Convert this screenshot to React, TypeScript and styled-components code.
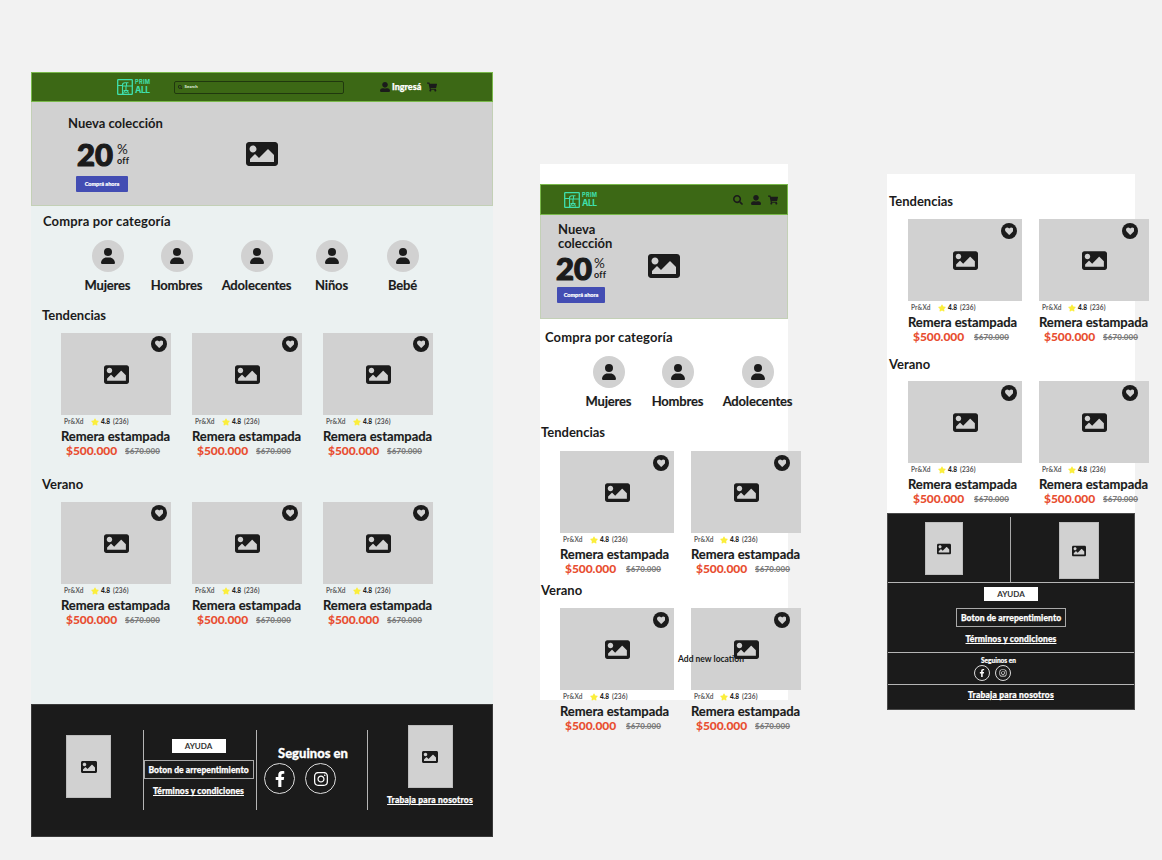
import React from "react";
import styled, { createGlobalStyle } from "styled-components";
import {
  FaImage,
  FaSearch,
  FaShoppingCart,
  FaStar,
  FaHeart,
  FaFacebookF,
  FaInstagram,
  FaUserAlt,
} from "react-icons/fa";
import { FaUser } from "react-icons/fa6";

const ink = "#1b1b1b";
const grey = "#d1d1d1";

const GlobalStyle = createGlobalStyle`
  * { box-sizing: border-box; }
  body { margin: 0; background: #f2f2f2; font-family: Lato, "Open Sans", sans-serif; color: ${ink}; }
  svg { display: block; flex: none; }
`;

const Canvas = styled.div`
  position: relative;
  width: 1162px;
  height: 860px;
  overflow: hidden;
  background: #f2f2f2;
`;

/* Artboards are freely placed on the design canvas */
const Artboard = styled.section<{ $x: number; $y: number; $w: number; $h: number; $bg: string }>`
  position: absolute;
  left: ${(p) => p.$x}px;
  top: ${(p) => p.$y}px;
  width: ${(p) => p.$w}px;
  height: ${(p) => p.$h}px;
  background: ${(p) => p.$bg};
`;

const Text = styled.span<{
  $size: number;
  $line?: number;
  $weight?: number;
  $track?: number;
  $color?: string;
  $stroke?: number;
}>`
  display: block;
  flex: none;
  white-space: nowrap;
  font-size: ${(p) => p.$size}px;
  line-height: ${(p) => p.$line ?? 16}px;
  font-weight: ${(p) => p.$weight ?? 700};
  letter-spacing: ${(p) => p.$track ?? 0}px;
  color: ${(p) => p.$color ?? ink};
  -webkit-text-stroke: ${(p) => p.$stroke ?? 0}px currentColor;
`;

const NavBar = styled.header<{ $left: number; $h?: number }>`
  display: flex;
  align-items: center;
  height: ${(p) => p.$h ?? 30}px;
  padding-left: ${(p) => p.$left}px;
  border: 1px solid #79b84a;
  background: #3c6815;
`;

const LogoRow = styled.div`
  display: flex;
  gap: 2px;
  width: 34px;
  height: 16px;
  flex: none;
`;

const LogoWords = styled.div`
  display: flex;
  flex-direction: column;
  width: 16px;
`;

const LogoWord = styled.span<{ $size: number; $line: number; $track: number }>`
  font-family: Inter, sans-serif;
  font-weight: 700;
  font-size: ${(p) => p.$size}px;
  line-height: ${(p) => p.$line}px;
  letter-spacing: ${(p) => p.$track}px;
  color: #3fe0ae;
  white-space: nowrap;
`;

const SearchBox = styled.div`
  display: flex;
  align-items: center;
  gap: 2px;
  width: 170px;
  height: 13px;
  margin-left: 23px;
  padding-left: 3px;
  border: 1px solid #20380e;
  border-radius: 2px;
`;

const NavIcons = styled.div<{ $left: number; $gap: number }>`
  display: flex;
  align-items: center;
  gap: ${(p) => p.$gap}px;
  margin-left: ${(p) => p.$left}px;
`;

const Hero = styled.div`
  display: flex;
  height: 104px;
  border: 1px solid #c3d0b6;
  border-top: 0;
  background: ${grey};
`;

const HeroCopy = styled.div<{ $w: number; $pad: string }>`
  width: ${(p) => p.$w}px;
  padding: ${(p) => p.$pad};
`;

const Promo = styled.div<{ $left: number; $gap: number; $h: number }>`
  display: flex;
  align-items: center;
  gap: ${(p) => p.$gap}px;
  height: ${(p) => p.$h}px;
  margin-left: ${(p) => p.$left}px;
`;

const BuyButton = styled.button<{ $w: number; $left: number }>`
  display: flex;
  align-items: center;
  justify-content: center;
  width: ${(p) => p.$w}px;
  height: 16px;
  margin: 0 0 0 ${(p) => p.$left}px;
  padding: 0;
  border: 0;
  border-radius: 1px;
  background: #434db3;
  font-family: inherit;
`;

const HeroArt = styled.div<{ $top: number }>`
  padding-top: ${(p) => p.$top}px;
`;

const Heading = styled(Text).attrs({ as: "h2" })<{ $left: number; $top?: number }>`
  margin: ${(p) => p.$top ?? 0}px 0 0 ${(p) => p.$left}px;
`;

const Categories = styled.div<{ $cols: string; $left: number; $top: number }>`
  display: grid;
  grid-template-columns: ${(p) => p.$cols};
  padding: ${(p) => p.$top}px 0 0 ${(p) => p.$left}px;
`;

const Category = styled.div`
  display: flex;
  flex-direction: column;
  align-items: center;
  gap: 5px;
`;

const Avatar = styled.div`
  display: grid;
  place-items: center;
  width: 32px;
  height: 32px;
  border-radius: 50%;
  background: ${grey};
`;

const Shelf = styled.section<{ $h: number; $left: number; $top: number }>`
  height: ${(p) => p.$h}px;
  padding: ${(p) => p.$top}px 0 0 ${(p) => p.$left}px;
`;

const CardRow = styled.div<{ $left: number; $gap: number; $top: number }>`
  display: flex;
  gap: ${(p) => p.$gap}px;
  padding: ${(p) => p.$top}px 0 0 ${(p) => p.$left}px;
`;

const Card = styled.article<{ $w: number }>`
  flex: none;
  width: ${(p) => p.$w}px;
`;

const Photo = styled.div`
  position: relative;
  display: grid;
  place-items: center;
  height: 82px;
  background: ${grey};
`;

const Favourite = styled.div<{ $right: number; $top: number }>`
  position: absolute;
  top: ${(p) => p.$top}px;
  right: ${(p) => p.$right}px;
  display: grid;
  place-items: center;
  width: 16px;
  height: 16px;
  border-radius: 50%;
  background: ${ink};
`;

const Meta = styled.div`
  display: flex;
  align-items: center;
  height: 14px;
  padding-left: 3px;
`;

const Brand = styled.div<{ $w: number }>`
  width: ${(p) => p.$w}px;
  flex: none;
`;

const Score = styled.div`
  width: 12px;
  margin-left: 2px;
  flex: none;
`;

const Prices = styled.div`
  display: flex;
  align-items: center;
  height: 14px;
  padding-left: 5px;
`;

const PriceNow = styled.div<{ $w: number }>`
  width: ${(p) => p.$w}px;
  flex: none;
`;

const OldPrice = styled(Text)`
  text-decoration: line-through;
`;

const Thumb = styled.div<{ $w: number; $h: number }>`
  display: grid;
  place-items: center;
  flex: none;
  width: ${(p) => p.$w}px;
  height: ${(p) => p.$h}px;
  background: ${grey};
  border: 1px solid #bdbdbd;
`;

const Link = styled(Text)`
  text-decoration: underline;
  text-decoration-thickness: 1px;
  text-underline-offset: 1px;
`;

const HelpTag = styled.div`
  display: grid;
  place-items: center;
  width: 54px;
  height: 14px;
  background: #fff;
`;

const RegretButton = styled.div`
  display: grid;
  place-items: center;
  width: 110px;
  height: 19px;
  margin: 7px 0 5px;
  border: 1px solid #a9a9a9;
`;

const HelpStack = styled.div`
  display: flex;
  flex-direction: column;
  align-items: center;
`;

const SocialRow = styled.div<{ $gap: number }>`
  display: flex;
  gap: ${(p) => p.$gap}px;
`;

const SocialRing = styled.div<{ $d: number }>`
  display: grid;
  place-items: center;
  width: ${(p) => p.$d}px;
  height: ${(p) => p.$d}px;
  border: 1px solid #dcdcdc;
  border-radius: 50%;
`;

const WideFooter = styled.footer`
  display: flex;
  height: 133px;
  margin-top: auto;
  padding-top: 25px;
  border: 1px solid #3a3a3a;
  background: ${ink};
`;

const FooterCol = styled.div<{ $w: number; $pad: string; $rule?: boolean }>`
  width: ${(p) => p.$w}px;
  height: 80px;
  padding: ${(p) => p.$pad};
  border-right: ${(p) => (p.$rule ? "1px solid #b5b5b5" : "0")};
  flex: none;
`;

const LastCol = styled.div`
  display: flex;
  flex-direction: column;
  align-items: center;
  gap: 4px;
  width: 124px;
  margin-top: -5px;
`;

const SlimFooter = styled.footer`
  height: 197px;
  border: 1px solid #4a4a4a;
  background: ${ink};
`;

const SlimBand = styled.div<{ $h: number; $pad: string; $last?: boolean }>`
  height: ${(p) => p.$h}px;
  padding: ${(p) => p.$pad};
  border-bottom: ${(p) => (p.$last ? "0" : "1px solid #b5b5b5")};
`;

const SplitBand = styled(SlimBand)`
  display: flex;
`;

const SplitHalf = styled.div<{ $pad: string; $rule?: boolean }>`
  width: 123px;
  height: 65px;
  padding: ${(p) => p.$pad};
  border-right: ${(p) => (p.$rule ? "1px solid #a9a9a9" : "0")};
`;

const Column = styled.div`
  display: flex;
  flex-direction: column;
  height: 100%;
`;

const Floating = styled.div`
  position: absolute;
  left: 678px;
  top: 653px;
`;

function Logo() {
  return (
    <LogoRow>
      <svg width="16" height="16" viewBox="0 0 16 16" fill="none" stroke="#3fe0ae" strokeWidth="1.1">
        <rect x="0.7" y="0.7" width="14.6" height="14.6" rx="0.6" strokeWidth="1.3" />
        <path d="M1 6.5H5.5M9 7H15M5.5 15V6Q5.5 3.8 8 3.8H11.5M5.5 7H9.5V4M9 7V11.5M6.5 11.5H11.5M7.5 12L6.5 14.5M10.5 12L11.5 14.5M8 13.2H10" />
      </svg>
      <LogoWords>
        <LogoWord $size={5.6} $line={6} $track={0.3}>PRIM</LogoWord>
        <LogoWord $size={8.6} $line={11} $track={-0.5}>ALL</LogoWord>
      </LogoWords>
    </LogoRow>
  );
}

interface ProductProps {
  w: number;
  heartRight: number;
  heartTop?: number;
  starAt?: number;
  oldAt?: number;
}

function Product({ w, heartRight, heartTop = 4, starAt = 27, oldAt = 59 }: ProductProps) {
  return (
    <Card $w={w}>
      <Photo>
        <FaImage size={25} />
        <Favourite $right={heartRight} $top={heartTop}>
          <FaHeart size={8.5} color={grey} />
        </Favourite>
      </Photo>
      <Meta>
        <Brand $w={starAt}>
          <Text $size={6.5} $line={14} $color="#5f5f5f" $track={0.1}>Pr&amp;Xd</Text>
        </Brand>
        <FaStar size={8} color="#fbee3c" />
        <Score>
          <Text $size={6.5} $line={14} $weight={900}>4.8</Text>
        </Score>
        <Text $size={6.5} $line={14} $color="#505050" $track={0.15}>(236)</Text>
      </Meta>
      <Text $size={13} $line={15} $track={-0.07} $stroke={0.15}>Remera estampada</Text>
      <Prices>
        <PriceNow $w={oldAt}>
          <Text $size={12} $line={14} $weight={900} $color="#e84e31" $track={-0.06}>$500.000</Text>
        </PriceNow>
        <OldPrice $size={8} $line={14} $weight={900} $color="#7d7d7d" $track={0.08}>$670.000</OldPrice>
      </Prices>
    </Card>
  );
}

function CategoryItem({ name }: { name: string }) {
  return (
    <Category>
      <Avatar>
        <FaUser size={16} />
      </Avatar>
      <Text $size={13} $track={-0.18} $stroke={0.15}>{name}</Text>
    </Category>
  );
}

function Help() {
  return (
    <HelpStack>
      <HelpTag>
        <Text $size={8} $line={12} $color="#333">AYUDA</Text>
      </HelpTag>
      <RegretButton>
        <Text $size={8.5} $line={12} $weight={900} $color="#fff" $track={0.08} $stroke={0.25}>Boton de arrepentimiento</Text>
      </RegretButton>
      <Link $size={8.5} $line={15} $weight={900} $color="#fff" $track={0.13} $stroke={0.25}>Términos y condiciones</Link>
    </HelpStack>
  );
}

function Offer() {
  return (
    <div>
      <Text $size={13.5} $line={13} $weight={400}>%</Text>
      <Text $size={9} $line={10} $track={0.2}>off</Text>
    </div>
  );
}

function Desktop() {
  return (
    <Artboard $x={31} $y={72} $w={462} $h={765} $bg="#ebf1f1">
      <Column>
        <NavBar $left={85}>
          <Logo />
          <SearchBox>
            <FaSearch size={4.5} />
            <Text $size={4.4} $line={8} $weight={900} $color="#dfe8d8">Search</Text>
          </SearchBox>
          <NavIcons $left={36} $gap={2}>
            <FaUserAlt size={10} />
            <Text $size={9} $weight={900} $color="#fff" $line={12} $stroke={0.25}>Ingresá</Text>
          </NavIcons>
          <NavIcons $left={6} $gap={0}>
            <FaShoppingCart size={10} />
          </NavIcons>
        </NavBar>
        <Hero>
          <HeroCopy $w={214} $pad="12px 0 0 36px">
            <Text $size={13} $line={18}>Nueva colección</Text>
            <Promo $left={9} $gap={4} $h={44}>
              <Text $size={31} $line={44} $weight={900} $stroke={1.2}>20</Text>
              <Offer />
            </Promo>
            <BuyButton $w={52} $left={8}>
              <Text $size={5.5} $line={8} $weight={900} $color="#fff" $stroke={0.15}>Comprá ahora</Text>
            </BuyButton>
          </HeroCopy>
          <HeroArt $top={36}>
            <FaImage size={32} />
          </HeroArt>
        </Hero>
        <Heading $size={13} $line={30} $left={12} $track={0.15}>Compra por categoría</Heading>
        <Categories $cols="69px 69px 91px 59px 83px" $left={42} $top={4}>
          {["Mujeres", "Hombres", "Adolecentes", "Niños", "Bebé"].map((n) => (
            <CategoryItem key={n} name={n} />
          ))}
        </Categories>
        <Shelf $h={181} $left={11} $top={12}>
          <Heading $size={13} $line={20} $left={0}>Tendencias</Heading>
          <CardRow $left={19} $gap={21} $top={8}>
            {[0, 1, 2].map((i) => (
              <Product key={i} w={110} heartRight={4} heartTop={3} />
            ))}
          </CardRow>
        </Shelf>
        <Shelf $h={150} $left={11} $top={0}>
          <Heading $size={13} $line={20} $left={0}>Verano</Heading>
          <CardRow $left={19} $gap={21} $top={8}>
            {[0, 1, 2].map((i) => (
              <Product key={i} w={110} heartRight={4} heartTop={3} />
            ))}
          </CardRow>
        </Shelf>
        <WideFooter>
          <FooterCol $w={112} $pad="5px 0 0 34px" $rule>
            <Thumb $w={45} $h={63}>
              <FaImage size={16} />
            </Thumb>
          </FooterCol>
          <FooterCol $w={113} $pad="9px 3px 0 0" $rule>
            <Help />
          </FooterCol>
          <FooterCol $w={111} $pad="14px 0 0 7px" $rule>
            <Heading $size={13} $line={19} $weight={900} $color="#fff" $left={14} $stroke={0.3}>Seguinos en</Heading>
            <SocialRow $gap={10}>
              <SocialRing $d={31}>
                <FaFacebookF size={16} color="#fff" />
              </SocialRing>
              <SocialRing $d={31}>
                <FaInstagram size={16} color="#fff" />
              </SocialRing>
            </SocialRow>
          </FooterCol>
          <LastCol>
            <Thumb $w={45} $h={63}>
              <FaImage size={16} />
            </Thumb>
            <Link $size={8.5} $line={16} $weight={900} $color="#fff" $track={0.2} $stroke={0.25}>Trabaja para nosotros</Link>
          </LastCol>
        </WideFooter>
      </Column>
    </Artboard>
  );
}

const TopGap = styled.div`
  height: 20px;
`;

function Tablet() {
  return (
    <Artboard $x={540} $y={164} $w={248} $h={536} $bg="#fff">
      <TopGap />
      <NavBar $left={23} $h={31}>
        <Logo />
        <NavIcons $left={135} $gap={7.5}>
          <FaSearch size={10} />
          <FaUserAlt size={10} />
          <FaShoppingCart size={10} />
        </NavIcons>
      </NavBar>
      <Hero>
        <HeroCopy $w={107} $pad="7px 0 0 17px">
          <Text $size={13} $line={14}>Nueva</Text>
          <Text $size={13} $line={14}>colección</Text>
          <Promo $left={-2} $gap={2} $h={37}>
            <Text $size={31} $line={37} $weight={900} $stroke={1.2}>20</Text>
            <Offer />
          </Promo>
          <BuyButton $w={48} $left={-1}>
            <Text $size={5.5} $line={8} $weight={900} $color="#fff" $stroke={0.15}>Comprá ahora</Text>
          </BuyButton>
        </HeroCopy>
        <HeroArt $top={35}>
          <FaImage size={32} />
        </HeroArt>
      </Hero>
      <Heading $size={13} $line={30} $left={5} $top={3} $track={0.15}>Compra por categoría</Heading>
      <Categories $cols="69px 69px 91px" $left={34} $top={4}>
        {["Mujeres", "Hombres", "Adolecentes"].map((n) => (
          <CategoryItem key={n} name={n} />
        ))}
      </Categories>
      <Shelf $h={171} $left={1} $top={13}>
        <Heading $size={13} $line={20} $left={0}>Tendencias</Heading>
        <CardRow $left={19} $gap={17} $top={9}>
          <Product w={114} heartRight={5} oldAt={61} starAt={27} />
          <Product w={110} heartRight={11} starAt={26} />
        </CardRow>
      </Shelf>
      <Shelf $h={150} $left={1} $top={0}>
        <Heading $size={13} $line={20} $left={0}>Verano</Heading>
        <CardRow $left={19} $gap={17} $top={8}>
          <Product w={114} heartRight={5} oldAt={61} starAt={27} />
          <Product w={110} heartRight={11} starAt={26} />
        </CardRow>
      </Shelf>
    </Artboard>
  );
}

function Mobile() {
  return (
    <Artboard $x={887} $y={174} $w={248} $h={536} $bg="#fff">
      <Shelf $h={180} $left={2} $top={17}>
        <Heading $size={13} $line={20} $left={0}>Tendencias</Heading>
        <CardRow $left={19} $gap={17} $top={8}>
          <Product w={114} heartRight={5} oldAt={61} starAt={27} />
          <Product w={110} heartRight={11} starAt={26} />
        </CardRow>
      </Shelf>
      <Shelf $h={159} $left={2} $top={0}>
        <Heading $size={13} $line={20} $left={0}>Verano</Heading>
        <CardRow $left={19} $gap={17} $top={7}>
          <Product w={114} heartRight={5} oldAt={61} starAt={27} />
          <Product w={110} heartRight={11} starAt={26} />
        </CardRow>
      </Shelf>
      <SlimFooter>
        <SplitBand $h={69} $pad="3px 0 0 0">
          <SplitHalf $pad="5px 0 0 37px" $rule>
            <Thumb $w={38} $h={53}>
              <FaImage size={14} />
            </Thumb>
          </SplitHalf>
          <SplitHalf $pad="5px 0 0 48px">
            <Thumb $w={40} $h={57}>
              <FaImage size={14} />
            </Thumb>
          </SplitHalf>
        </SplitBand>
        <SlimBand $h={70} $pad="4px 0 0 0">
          <Help />
        </SlimBand>
        <SlimBand $h={32} $pad="3px 0 0 86px">
          <Heading $size={6.5} $line={9} $weight={900} $color="#fff" $left={7} $stroke={0.2}>Seguinos en</Heading>
          <SocialRow $gap={5}>
            <SocialRing $d={16}>
              <FaFacebookF size={8} color="#fff" />
            </SocialRing>
            <SocialRing $d={16}>
              <FaInstagram size={8} color="#fff" />
            </SocialRing>
          </SocialRow>
        </SlimBand>
        <SlimBand $h={24} $pad="2px 0 0 0" $last>
          <HelpStack>
            <Link $size={8.5} $line={16} $weight={900} $color="#fff" $track={0.2} $stroke={0.25}>Trabaja para nosotros</Link>
          </HelpStack>
        </SlimBand>
      </SlimFooter>
    </Artboard>
  );
}

export default function App() {
  return (
    <>
      <GlobalStyle />
      <Canvas>
        <Desktop />
        <Tablet />
        <Mobile />
        <Floating>
          <Text $size={8.5} $line={12}>Add new location</Text>
        </Floating>
      </Canvas>
    </>
  );
}
